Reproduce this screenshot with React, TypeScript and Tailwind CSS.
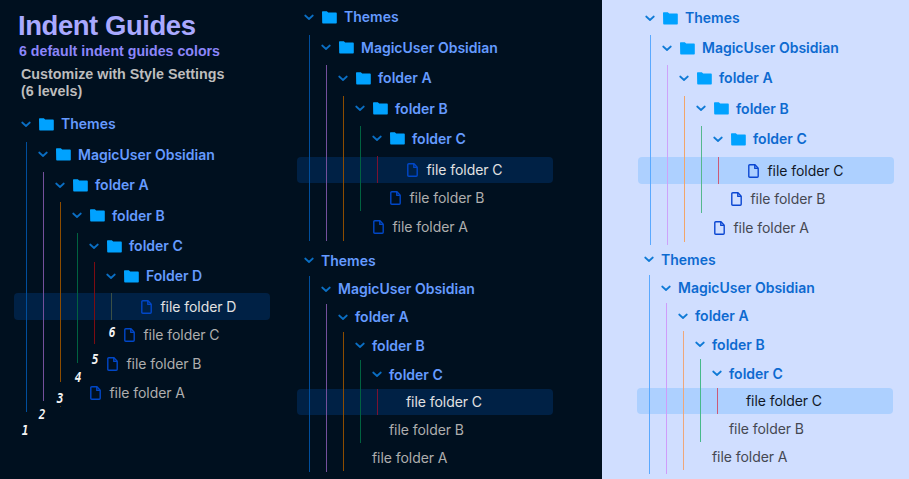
type Row = { label: string; depth: number; h: string; kind: "folder" | "file" | "active" };
type Guide = { cls: string };

const indent = ["pl-0", "pl-[17px]", "pl-[34px]", "pl-[51px]", "pl-[68px]", "pl-[85px]", "pl-[102px]"];

function Chevron() {
  return (
    <svg className="h-[7px] w-[10px] shrink-0" viewBox="0 0 10 7" fill="none" stroke="currentColor" strokeWidth="1.7" strokeLinecap="round" strokeLinejoin="round">
      <path d="M1.2 1.5 L5 5 L8.8 1.5" />
    </svg>
  );
}

function FolderIcon() {
  return (
    <svg className="h-[13px] w-[15px] shrink-0" viewBox="0 0 15 13" fill="#00a2ff">
      <path d="M0 1Q0 .3 .7 .3H4.8L6.2 1.6H14Q14.8 1.6 14.8 2.4V11.8Q14.8 12.6 14 12.6H1Q.2 12.6 .2 11.8Z" />
    </svg>
  );
}

function FileIcon({ light }: { light: boolean }) {
  return (
    <svg className={`h-[14px] w-[11px] shrink-0 ${light ? "text-[#0a46d2]" : "text-[#0047c8]"}`} viewBox="0 0 11 14" fill="none" stroke="currentColor" strokeWidth="1.4" strokeLinejoin="round">
      <path d="M1.8 .8H7L10.2 4.2V12.2Q10.2 13.2 9.2 13.2H1.8Q.8 13.2 .8 12.2V1.8Q.8 .8 1.8 .8Z" />
      <path d="M6.8 1V4.4H10" />
    </svg>
  );
}

function Tree({ rows, guides, light = false, icons = true, className }: { rows: Row[]; guides: Guide[]; light?: boolean; icons?: boolean; className: string }) {
  return (
    <div className={`relative w-64 ${className}`}>
      {rows.map((r) => {
        const folder = r.kind === "folder";
        const tone = folder
          ? light ? "font-semibold text-[#0d6ad0]" : "font-semibold text-[#659bff]"
          : r.kind === "active"
            ? light ? "tracking-[-0.06px] text-[#111827]" : "tracking-[-0.06px] text-[#e2e2e2]"
            : light ? "tracking-[-0.06px] text-[#454852]" : "tracking-[-0.06px] text-[#aeaeae]";
        const bg = r.kind === "active" ? (light ? "rounded bg-[#add0ff]" : "rounded bg-[#002145]") : "";
        return (
          <div key={r.label} className={`${r.h} ${bg}`}>
            <div className={`flex h-full items-center ${indent[r.depth]}`}>
              <span className={`ml-[7px] flex w-[17px] ${light ? "text-[#0f7ad6]" : "text-[#0a6fc4]"}`}>{folder && <Chevron />}</span>
              {icons && <span className={folder ? "w-[23px] pl-[0.8px]" : "w-[20.5px] pl-[1.2px]"}>{folder ? <FolderIcon /> : <FileIcon light={light} />}</span>}
              <span className={`whitespace-nowrap text-[14px] leading-5 ${tone}`}>{r.label}</span>
            </div>
          </div>
        );
      })}
      {guides.map((g) => (
        <i key={g.cls} className={`absolute w-px ${g.cls}`} />
      ))}
    </div>
  );
}

const names = ["Themes", "MagicUser Obsidian", "folder A", "folder B", "folder C"];

function makeRows(heights: string[]): Row[] {
  return [
    ...names.map((label, depth): Row => ({ label, depth, h: heights[depth], kind: "folder" })),
    { label: "file folder C", depth: 5, h: heights[5], kind: "active" },
    { label: "file folder B", depth: 4, h: heights[6], kind: "file" },
    { label: "file folder A", depth: 3, h: heights[7], kind: "file" },
  ];
}

const sixLevels: Row[] = [
  { label: "Themes", depth: 0, h: "h-[30px]", kind: "folder" },
  { label: "MagicUser Obsidian", depth: 1, h: "h-[31px]", kind: "folder" },
  { label: "folder A", depth: 2, h: "h-[30px]", kind: "folder" },
  { label: "folder B", depth: 3, h: "h-[31px]", kind: "folder" },
  { label: "folder C", depth: 4, h: "h-[30px]", kind: "folder" },
  { label: "Folder D", depth: 5, h: "h-8 pb-0.5", kind: "folder" },
  { label: "file folder D", depth: 6, h: "h-[27px]", kind: "active" },
  { label: "file folder C", depth: 5, h: "h-[30px]", kind: "file" },
  { label: "file folder B", depth: 4, h: "h-7", kind: "file" },
  { label: "file folder A", depth: 3, h: "h-[30px]", kind: "file" },
];

const iconHeights = ["h-[30px]", "h-[31px]", "h-[30px]", "h-[31px]", "h-[33px] pb-1", "h-[26px]", "h-[30px]", "h-7"];
const iconHeightsLight = ["h-[30px]", "h-[30px]", "h-[30px]", "h-[31px]", "h-[33px] pb-[3px]", "h-[27px]", "h-[30px]", "h-7"];
const plainHeights = ["h-[29px]", "h-7", "h-7", "h-[29px]", "h-[29px]", "h-[26px]", "h-[30px]", "h-[26px]"];

// Guide offsets are measured from each tree's own top-left corner.
const guidesSix: Guide[] = [
  { cls: "left-3 top-[33px] h-[270px] bg-[#004e9c]" },
  { cls: "left-[29px] top-[63px] h-[229px] bg-[#74509c]" },
  { cls: "left-[46px] top-[93px] h-[180px] bg-[#8c4c00]" },
  { cls: "left-[46px] top-[297px] h-px bg-[#5a3200]" },
  { cls: "left-[63px] top-[124px] h-[130px] bg-[#006240]" },
  { cls: "left-20 top-[153px] h-[82px] bg-[#7c0c12]" },
  { cls: "left-[97px] top-[184px] h-[27px] bg-[#3b5045]" },
];
const guidesDarkTop: Guide[] = [
  { cls: "left-3 top-[33px] h-[206px] bg-[#004e9c]" },
  { cls: "left-[29px] top-[63px] h-[176px] bg-[#74509c]" },
  { cls: "left-[46px] top-[94px] h-[145px] bg-[#8c4c00]" },
  { cls: "left-[63px] top-[124px] h-[85px] bg-[#006240]" },
  { cls: "left-20 top-[154px] h-[27px] bg-[#7a1230]" },
];
const guidesDarkBottom: Guide[] = [
  { cls: "left-3 top-[30px] h-[196px] bg-[#004e9c]" },
  { cls: "left-[29px] top-[58px] h-[168px] bg-[#74509c]" },
  { cls: "left-[46px] top-[86px] h-[139px] bg-[#8c4c00]" },
  { cls: "left-[63px] top-[114px] h-[83px] bg-[#006240]" },
  { cls: "left-20 top-[143px] h-[26px] bg-[#7a1230]" },
];
const guidesLightTop: Guide[] = [
  { cls: "left-3 top-[32px] h-[210px] bg-[#5aa9ff]" },
  { cls: "left-[29px] top-[62px] h-[180px] bg-[#cda2fa]" },
  { cls: "left-[46px] top-[93px] h-[146px] bg-[#f2a568]" },
  { cls: "left-[63px] top-[123px] h-[87px] bg-[#55b88e]" },
  { cls: "left-20 top-[154px] h-[27px] bg-[#cb5b78]" },
];
const guidesLightBottom: Guide[] = [
  { cls: "left-3 top-[30px] h-[199px] bg-[#5aa9ff]" },
  { cls: "left-[29px] top-[58px] h-[171px] bg-[#cf9cfa]" },
  { cls: "left-[46px] top-[86px] h-[139px] bg-[#efa77a]" },
  { cls: "left-[63px] top-[114px] h-[83px] bg-[#46b98a]" },
  { cls: "left-20 top-[143px] h-[26px] bg-[#cb5b78]" },
];

const marks = [
  ["1", "left-[21px] top-[421px]"],
  ["2", "left-[38px] top-[405px]"],
  ["3", "left-[56px] top-[389px]"],
  ["4", "left-[74px] top-[368px]"],
  ["5", "left-[91px] top-[350px]"],
  ["6", "left-[108px] top-[323px]"],
];

export default function App() {
  return (
    <div className="flex h-[479px] w-[909px] overflow-hidden bg-[#00101f] font-['Inter',sans-serif]">
      <section className="relative w-[297px]">
        <header className="h-[109px] pt-2.5 pl-[18px] font-['Liberation_Sans',Arial,sans-serif] font-bold whitespace-nowrap">
          <h1 className="text-[27.5px] leading-8 tracking-[-0.45px] text-[#a9a9ff]">Indent Guides</h1>
          <p className="pl-px text-[14.2px] leading-[19px] text-[#8c86fa]">6 default indent guides colors</p>
          <p className="mt-[5px] pl-[3px] text-[14.3px] leading-[17px] text-[#bdbdbd]">
            Customize with Style Settings
            <br />
            (6 levels)
          </p>
        </header>
        <Tree rows={sixLevels} guides={guidesSix} className="ml-3.5" />
        {marks.map(([n, pos]) => (
          <span key={n} className={`absolute w-2 scale-x-80 font-['DejaVu_Sans_Mono',monospace] text-[14px] leading-[18px] font-bold text-[#f4f4f4] italic ${pos}`}>{n}</span>
        ))}
      </section>
      <section className="w-[305px] pt-0.5">
        <Tree rows={makeRows(iconHeights)} guides={guidesDarkTop} className="h-[244px]" />
        <Tree rows={makeRows(plainHeights)} guides={guidesDarkBottom} icons={false} className="" />
      </section>
      <section className="w-[307px] bg-[#d0deff] pt-[3px] pl-[35px]">
        <Tree rows={makeRows(iconHeightsLight)} guides={guidesLightTop} light className="ml-px h-[242px]" />
        <Tree rows={makeRows(plainHeights)} guides={guidesLightBottom} light icons={false} className="" />
      </section>
    </div>
  );
}
